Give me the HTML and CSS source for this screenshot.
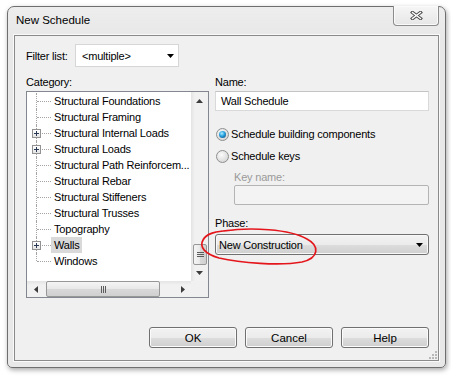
FILE: index.html
```html
<!DOCTYPE html>
<html lang="en">
<head>
  <meta charset="UTF-8">
  <meta name="viewport" content="width=device-width, initial-scale=1.0">
  <title>New Schedule</title>
  <link rel="stylesheet" href="styles.css">
</head>
<body>
  <div class="window">
    <!-- title bar -->
    <div class="titlebar">
      <span class="title">New Schedule</span>
      <div class="close">
        <svg width="13" height="9" viewBox="0 0 13 9">
          <path d="M2.5 1.5 L10.5 7.5 M10.5 1.5 L2.5 7.5" stroke="#4a4a4a" stroke-width="3.4" stroke-linecap="square" fill="none"/>
          <path d="M2.5 1.5 L10.5 7.5 M10.5 1.5 L2.5 7.5" stroke="#fdfdfd" stroke-width="1.4" stroke-linecap="square" fill="none"/>
        </svg>
      </div>
    </div>

    <div class="client">
      <div class="filter-row">
        <span class="filter-label">Filter list:</span>
        <div class="combo">
          <span>&lt;multiple&gt;</span>
          <svg class="tri" width="7" height="4" viewBox="0 0 7 4"><path d="M0 0H7L3.5 4Z"/></svg>
        </div>
      </div>

      <div class="columns">
        <!-- category tree -->
        <div class="left">
          <div class="label">Category:</div>
          <div class="listbox">
            <ul class="tree">
              <li><span class="text">Structural Foundations</span></li>
              <li><span class="text">Structural Framing</span></li>
              <li><span class="plus"></span><span class="text">Structural Internal Loads</span></li>
              <li><span class="plus"></span><span class="text">Structural Loads</span></li>
              <li><span class="text">Structural Path Reinforcem...</span></li>
              <li><span class="text">Structural Rebar</span></li>
              <li><span class="text">Structural Stiffeners</span></li>
              <li><span class="text">Structural Trusses</span></li>
              <li><span class="text">Topography</span></li>
              <li><span class="plus"></span><span class="text selected">Walls</span></li>
              <li><span class="text">Windows</span></li>
            </ul>
            <div class="vscroll">
              <div class="sbtn"><svg width="7" height="4" viewBox="0 0 7 4"><path d="M3.5 0L7 4H0Z"/></svg></div>
              <div class="vtrack">
                <div class="vthumb">
                  <svg width="7" height="5" viewBox="0 0 7 5"><path d="M0 0.5H7M0 2.5H7M0 4.5H7" stroke="#5c5c5c" stroke-width="1"/></svg>
                </div>
              </div>
              <div class="sbtn"><svg width="7" height="4" viewBox="0 0 7 4"><path d="M0 0H7L3.5 4Z"/></svg></div>
            </div>
            <div class="hscroll">
              <div class="sbtn"><svg width="4" height="7" viewBox="0 0 4 7"><path d="M0 3.5L4 0V7Z"/></svg></div>
              <div class="htrack">
                <div class="hthumb">
                  <svg width="5" height="7" viewBox="0 0 5 7"><path d="M0.5 0V7M2.5 0V7M4.5 0V7" stroke="#5c5c5c" stroke-width="1"/></svg>
                </div>
              </div>
              <div class="sbtn"><svg width="4" height="7" viewBox="0 0 4 7"><path d="M0 0L4 3.5L0 7Z"/></svg></div>
            </div>
            <div class="corner"></div>
          </div>
        </div>

        <!-- schedule options -->
        <div class="right">
          <div class="label">Name:</div>
          <div class="textbox">Wall Schedule</div>

          <div class="radio-row first">
            <span class="radio"><span class="dot"></span></span>
            <span>Schedule building components</span>
          </div>
          <div class="radio-row">
            <span class="radio"></span>
            <span>Schedule keys</span>
          </div>

          <div class="label disabled indent">Key name:</div>
          <div class="textbox disabled-box indent"></div>

          <div class="label phase-label">Phase:</div>
          <div class="dropdown">
            <span>New Construction</span>
            <svg class="tri" width="7" height="4" viewBox="0 0 7 4"><path d="M0 0H7L3.5 4Z"/></svg>
          </div>
        </div>
      </div>

      <div class="buttons">
        <button type="button">OK</button>
        <button type="button">Cancel</button>
        <button type="button">Help</button>
      </div>

      <svg class="grip" width="8" height="8" viewBox="0 0 8 8">
        <rect x="6" y="0" width="2" height="2" fill="#b8b8b8"/>
        <rect x="3" y="3" width="2" height="2" fill="#b8b8b8"/>
        <rect x="6" y="3" width="2" height="2" fill="#b8b8b8"/>
        <rect x="0" y="6" width="2" height="2" fill="#b8b8b8"/>
        <rect x="3" y="6" width="2" height="2" fill="#b8b8b8"/>
        <rect x="6" y="6" width="2" height="2" fill="#b8b8b8"/>
      </svg>
    </div>
  </div>

  <!-- hand drawn red mark around the phase -->
  <svg class="markup" width="451" height="376" viewBox="0 0 451 376">
    <path d="M224 231 C250 227, 290 229, 307 239 C320 246, 319 258, 302 262 C280 266, 240 263, 219 258 C205 254, 199 247, 203 240 C206 234, 214 231, 234 230" fill="none" stroke="#e4161c" stroke-width="1.7" stroke-linecap="round"/>
  </svg>
</body>
</html>
```

FILE: styles.css
```css
body {
  margin: 0;
  width: 451px;
  height: 376px;
  overflow: hidden;
  position: relative;
  background: #fff;
  font-family: "Liberation Sans", Arial, sans-serif;
  font-size: 11px;
  letter-spacing: -0.2px;
  color: #000;
}

.window {
  margin: 6px 0 0 7px;
  width: 439px;
  height: 362px;
  box-sizing: border-box;
  border: 1px solid #6e6e6e;
  border-radius: 7px 7px 5px 5px;
  background: linear-gradient(#ededed, #e8e8e8 30px, #e8e8e8);
  box-shadow: 1px 2px 5px rgba(0, 0, 0, 0.35);
  padding: 0 6px 6px 6px;
  display: flex;
  flex-direction: column;
}

.titlebar {
  height: 28px;
  flex: none;
  display: flex;
  justify-content: space-between;
  align-items: flex-start;
}
.title {
  padding: 6px 0 0 2px;
  line-height: 14px;
  font-size: 11.5px;
  letter-spacing: 0;
}
.close {
  margin-top: -1px;
  width: 46px;
  height: 20px;
  box-sizing: border-box;
  border: 1px solid #8c8c8c;
  border-top: none;
  border-radius: 0 0 4px 4px;
  background: linear-gradient(#f6f6f6, #e6e6e6);
  box-shadow: inset 0 0 0 1px #fafafa;
  display: flex;
  align-items: center;
  justify-content: center;
}

.client {
  flex: 1;
  min-height: 0;
  position: relative;
  border: 1px solid #8a8a8a;
  background: #f0f0f0;
  box-shadow: 0 0 0 1px #f9f9f9;
  padding: 8px 9px 12px 11px;
  display: flex;
  flex-direction: column;
}

.filter-row {
  display: flex;
  align-items: center;
  height: 23px;
}
.filter-label {
  width: 49px;
}
.combo {
  width: 104px;
  height: 23px;
  box-sizing: border-box;
  border: 1px solid #d6d6d6;
  background: #fff;
  display: flex;
  align-items: center;
  justify-content: space-between;
  padding: 0 4px 0 6px;
}

.columns {
  margin-top: 8px;
  display: flex;
  gap: 6px;
}
.label {
  line-height: 14px;
  height: 14px;
}
.left {
  width: 183px;
}
.left .label {
  margin-bottom: 2px;
}
.right {
  flex: 1;
  display: flex;
  flex-direction: column;
}

/* tree list */
.listbox {
  height: 207px;
  box-sizing: border-box;
  border: 1px solid #828790;
  background: #fff;
  display: grid;
  grid-template-columns: 1fr 17px;
  grid-template-rows: 1fr 16px;
}
.tree {
  list-style: none;
  margin: 0;
  padding: 1px 0 0 0;
  overflow: hidden;
  min-width: 0;
}
.tree li {
  position: relative;
  height: 16px;
  line-height: 16px;
  padding-left: 24px;
  white-space: nowrap;
}
.tree li::before {
  content: "";
  position: absolute;
  left: 9px;
  top: 0;
  bottom: 0;
  border-left: 1px dotted #a3a3a3;
}
.tree li:last-child::before {
  bottom: 8px;
}
.tree li::after {
  content: "";
  position: absolute;
  left: 10px;
  top: 8px;
  width: 14px;
  border-top: 1px dotted #a3a3a3;
}
.tree .text {
  display: inline-block;
  padding: 0 3px;
  vertical-align: top;
}
.tree .selected {
  background: #d9d9d9;
}
.plus {
  position: absolute;
  left: 5px;
  top: 4px;
  width: 9px;
  height: 9px;
  box-sizing: border-box;
  border: 1px solid #929292;
  background: linear-gradient(#ffffff, #e4e4e4);
  z-index: 1;
}
.plus::before,
.plus::after {
  content: "";
  position: absolute;
  background: #2a3a55;
}
.plus::before {
  left: 1px;
  top: 3px;
  width: 5px;
  height: 1px;
}
.plus::after {
  left: 3px;
  top: 1px;
  width: 1px;
  height: 5px;
}

/* scroll bars */
.vscroll {
  display: flex;
  flex-direction: column;
  background: linear-gradient(to right, #e4e4e4, #f1f1f1 4px, #f1f1f1);
}
.sbtn {
  flex: none;
  width: 17px;
  height: 17px;
  display: flex;
  align-items: center;
  justify-content: center;
  fill: #3c3c3c;
}
.vscroll .sbtn:last-child {
  height: 16px;
}
.vtrack {
  flex: 1;
  display: flex;
  flex-direction: column;
}
.vthumb {
  margin: auto 1px 0 2px;
  height: 21px;
  box-sizing: border-box;
  border: 1px solid #979797;
  border-radius: 2px;
  background: linear-gradient(to right, #f5f5f5, #e8e8e8 50%, #d9d9d9 50%, #d0d0d0);
  display: flex;
  align-items: center;
  justify-content: center;
}
.hscroll {
  display: flex;
  background: linear-gradient(#e4e4e4, #f1f1f1 4px, #f1f1f1);
}
.hscroll .sbtn {
  height: 16px;
}
.htrack {
  flex: 1;
  display: flex;
}
.hthumb {
  margin: 0 0 0 2px;
  width: 114px;
  box-sizing: border-box;
  border: 1px solid #979797;
  border-radius: 2px;
  background: linear-gradient(#f5f5f5, #e8e8e8 50%, #d9d9d9 50%, #d0d0d0);
  display: flex;
  align-items: center;
  justify-content: center;
}
.corner {
  background: #f0f0f0;
}

/* right column */
.textbox {
  margin-top: 2px;
  height: 20px;
  box-sizing: border-box;
  border: 1px solid #d9d9d9;
  border-top-color: #c4c4c4;
  background: #fff;
  padding-left: 5px;
  line-height: 18px;
}
.radio-row {
  margin-top: 6px;
  height: 16px;
  display: flex;
  align-items: center;
  gap: 2px;
}
.radio-row.first {
  margin-top: 15px;
}
.radio {
  margin-left: 1px;
  width: 13px;
  height: 13px;
  box-sizing: border-box;
  border-radius: 50%;
  border: 1px solid #8e8f8f;
  background: radial-gradient(circle at 40% 35%, #fbfbfb, #d6d6d6 80%);
  display: flex;
  align-items: center;
  justify-content: center;
}
.dot {
  width: 7px;
  height: 7px;
  border-radius: 50%;
  background: radial-gradient(circle at 40% 35%, #b8ecff 0, #2aa7e3 40%, #0d4f84 90%);
}
.indent {
  margin-left: 19px;
}
.disabled {
  margin-top: 6px;
  color: #9a9a9a;
}
.disabled-box {
  margin-top: 1px;
  background: #f3f3f3;
  border: 1px solid #b4b4b4;
  border-radius: 2px;
}
.phase-label {
  margin-top: 11px;
}
.dropdown {
  margin-top: 4px;
  height: 21px;
  box-sizing: border-box;
  border: 1px solid #707070;
  border-radius: 3px;
  background: linear-gradient(#f2f2f2, #ebebeb 50%, #dddddd 50%, #cfcfcf);
  box-shadow: inset 0 0 0 1px #f8f8f8;
  display: flex;
  align-items: center;
  justify-content: space-between;
  padding: 0 5px 0 3px;
}

/* dialog buttons */
.buttons {
  margin-top: auto;
  display: flex;
  justify-content: flex-end;
  gap: 8px;
}
.buttons button {
  width: 88px;
  height: 21px;
  border: 1px solid #707070;
  border-radius: 3px;
  background: linear-gradient(#f2f2f2, #ebebeb 50%, #dddddd 50%, #cfcfcf);
  box-shadow: inset 0 0 0 1px #fbfbfb;
  font-family: "Liberation Sans", Arial, sans-serif;
  font-size: 11.5px;
  color: #000;
  padding: 0;
}

.grip {
  position: absolute;
  right: 1px;
  bottom: 1px;
}

.markup {
  position: absolute;
  left: 0;
  top: 0;
  pointer-events: none;
}
```
